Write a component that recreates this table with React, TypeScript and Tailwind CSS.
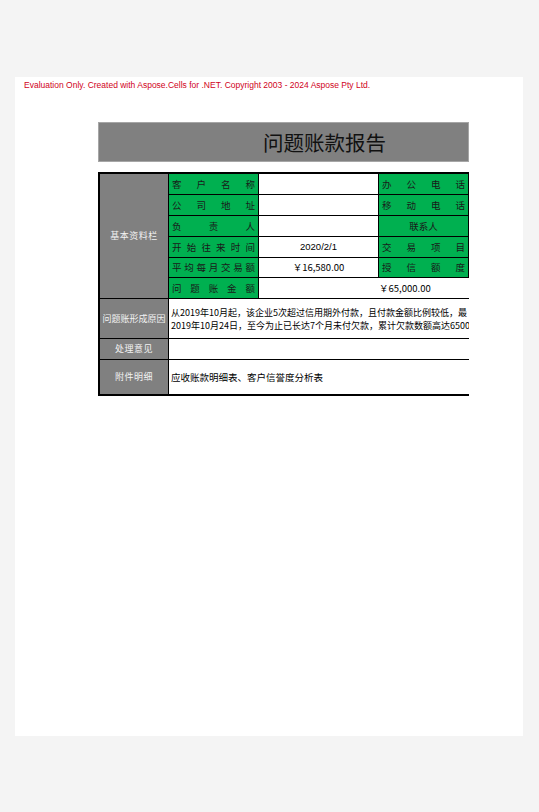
import React from "react";

const cjk = { fontFamily: '"Noto Sans CJK SC", "Noto Sans", sans-serif' };

function Dist({ text }: { text: string }) {
  return (
    <div className="flex h-full items-center justify-between px-[3px] text-[9.5px] text-[#1a1a1a]">
      {text.split("").map((c, i) => (
        <span key={i}>{c}</span>
      ))}
    </div>
  );
}

export default function App() {
  const green = "bg-[#00b050] border-r border-b border-black";
  const grey = "bg-[#808080] border-r border-b border-black flex items-center justify-center text-[9px] text-[#f2f2f2] tracking-[0.5px]";
  const white = "bg-white border-r border-b border-black flex items-center justify-center text-[9.5px] text-black";
  return (
    <div className="min-h-[812px] w-[539px] bg-[#f4f4f4] pt-[77px] pl-[15px]" style={cjk}>
      <div className="h-[659px] w-[508px] bg-white">
        <div
          className="h-[14px] pl-[9px] pt-[2px] text-[8.5px] leading-[12px] text-[#d0021b]"
          style={{ fontFamily: '"Liberation Sans", Arial, sans-serif' }}
        >
          Evaluation Only. Created with Aspose.Cells for .NET. Copyright 2003 - 2024 Aspose Pty Ltd.
        </div>
        <div className="ml-[83px] mt-[31px] flex h-[40px] w-[371px] items-center border border-[#a6a6a6] bg-[#808080] pl-[164px] text-[20.5px] text-[#111]">
          问题账款报告
        </div>
        <div className="ml-[83px] mt-[10px] grid w-[371px] grid-cols-[69px_90px_120px_90px] grid-rows-[21px_21px_21px_21px_20px_21px_40px_21px_34px] border-t-2 border-b-2 border-l-2 border-black">
          <div className={`${grey} row-span-6`}>基本资料栏</div>
          <div className={green}><Dist text="客户名称" /></div>
          <div className={white}></div>
          <div className={green}><Dist text="办公电话" /></div>

          <div className={green}><Dist text="公司地址" /></div>
          <div className={white}></div>
          <div className={green}><Dist text="移动电话" /></div>

          <div className={green}><Dist text="负责人" /></div>
          <div className={white}></div>
          <div className={`${green} flex items-center justify-center text-[9.5px] text-[#1a1a1a]`}>联系人</div>

          <div className={green}><Dist text="开始往来时间" /></div>
          <div className={white} style={{ fontFamily: '"Liberation Sans", Arial, sans-serif' }}>2020/2/1</div>
          <div className={green}><Dist text="交易项目" /></div>

          <div className={green}><Dist text="平均每月交易额" /></div>
          <div className={white}>￥16,580.00</div>
          <div className={green}><Dist text="授信额度" /></div>

          <div className={green}><Dist text="问题账金额" /></div>
          <div className="col-span-2 flex items-center border-b border-black bg-white pl-[120px] text-[9.5px] text-black">￥65,000.00</div>

          <div className={`${grey} tracking-normal`}>问题账形成原因</div>
          <div className="col-span-3 flex flex-col justify-center overflow-hidden whitespace-nowrap border-b border-black bg-white pl-[2px] text-[9px] leading-[13px] text-black">
            <div>从2019年10月起，该企业5次超过信用期外付款，且付款金额比例较低，最</div>
            <div>2019年10月24日，至今为止已长达7个月未付欠款，累计欠款数额高达6500</div>
          </div>

          <div className={grey}>处理意见</div>
          <div className="col-span-3 border-b border-black bg-white"></div>

          <div className={`${grey} border-b-0`}>附件明细</div>
          <div className="col-span-3 flex items-center bg-white pl-[2px] text-[9.5px] text-black">应收账款明细表、客户信誉度分析表</div>
        </div>
      </div>
    </div>
  );
}
